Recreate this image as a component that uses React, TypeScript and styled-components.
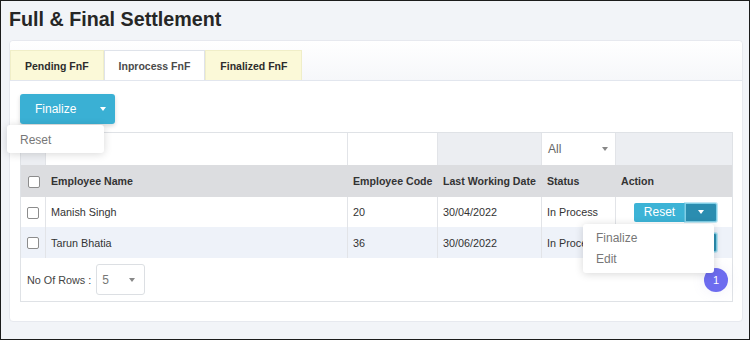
import React from "react";
import styled, { createGlobalStyle } from "styled-components";

const Global = createGlobalStyle`
  html, body { margin: 0; padding: 0; }
  body { font-family: "Liberation Sans", Arial, sans-serif; }
  * { box-sizing: border-box; }
`;

const Page = styled.div`
  width: 750px;
  height: 340px;
  border: 1px solid #1c1c1c;
  background: #f2f4f8;
  padding: 0 6px 0 8px;
  overflow: hidden;
`;

const Title = styled.h1`
  margin: 7px 0 0 0;
  font-size: 19.7px;
  line-height: 22px;
  font-weight: 700;
  color: #262626;
`;

const Card = styled.div`
  margin-top: 10px;
  height: 282px;
  background: #fff;
  border: 1px solid #e7e9ef;
  border-radius: 4px;
  display: flex;
  flex-direction: column;
`;

const TabBar = styled.div`
  display: flex;
  height: 40px;
  padding-top: 9px;
  border-bottom: 1px solid #e2e6ee;
  background: linear-gradient(#ffffff, #f6f7fa);
  border-radius: 4px 4px 0 0;
`;

const Tab = styled.div<{ $active?: boolean }>`
  height: 30px;
  padding: 0 14px;
  display: flex;
  align-items: center;
  font-size: 10.5px;
  font-weight: 700;
  color: ${(p) => (p.$active ? "#4a4a4a" : "#2c2c2c")};
  background: ${(p) => (p.$active ? "#ffffff" : "#fbf9d8")};
  border: 1px solid ${(p) => (p.$active ? "#dfe3ea" : "#f0eec8")};
  border-bottom: none;
`;

const Body = styled.div`
  flex: 1;
  padding: 13px 9px 0 10px;
`;

const SplitWrap = styled.div`
  position: relative;
  width: 95px;
  height: 30px;
`;

const PrimaryButton = styled.button`
  width: 95px;
  height: 30px;
  border: none;
  border-radius: 3px;
  background: #3ab0d4;
  color: #fff;
  font: 12px "Liberation Sans", Arial, sans-serif;
  display: flex;
  align-items: center;
  justify-content: space-between;
  padding: 0 9px 0 15px;
  box-shadow: 0 2px 4px rgba(0, 0, 0, 0.15);
`;

const Caret = styled.span<{ $color?: string }>`
  display: inline-block;
  width: 0;
  height: 0;
  border-left: 3.5px solid transparent;
  border-right: 3.5px solid transparent;
  border-top: 4px solid ${(p) => p.$color || "#fff"};
`;

const Menu = styled.div<{ $top: number; $left: number; $width: number }>`
  position: absolute;
  top: ${(p) => p.$top}px;
  left: ${(p) => p.$left}px;
  width: ${(p) => p.$width}px;
  padding: 4px 0 3px;
  background: #fff;
  border-radius: 3px;
  box-shadow: 0 1px 8px rgba(0, 0, 0, 0.16);
  z-index: 10;
`;

const MenuItem = styled.div`
  height: 21px;
  display: flex;
  align-items: center;
  padding-left: 13px;
  font-size: 12px;
  color: #777;
`;

const TableBox = styled.div`
  margin-top: 8px;
  border: 1px solid #dfe2e6;
`;

const Table = styled.table`
  width: 100%;
  border-collapse: separate;
  border-spacing: 0;
  table-layout: fixed;
`;

const FilterRow = styled.tr`
  height: 32px;
  background: #eceef2;
`;

const FilterCell = styled.td<{ $input?: boolean }>`
  padding: 0 6px;
  background: ${(p) => (p.$input ? "#fff" : "transparent")};
  border-right: 1px solid #e2e4e8;
  font-size: 12px;
  color: #666;
  &:last-child { border-right: none; }
`;

const SelectInner = styled.div`
  display: flex;
  align-items: center;
  justify-content: space-between;
  padding-right: 1px;
`;

const HeadRow = styled.tr`
  height: 32px;
  background: #dcdde0;
`;

const Th = styled.th<{ $center?: boolean }>`
  padding: 0 5px;
  text-align: ${(p) => (p.$center ? "center" : "left")};
  font-size: 10.6px;
  font-weight: 700;
  color: #333;
  white-space: nowrap;
`;

const Row = styled.tr<{ $alt?: boolean; $h: number }>`
  height: ${(p) => p.$h}px;
  background: ${(p) => (p.$alt ? "#eef2f9" : "#fff")};
`;

const Td = styled.td<{ $center?: boolean }>`
  padding: 0 5px;
  text-align: ${(p) => (p.$center ? "center" : "left")};
  font-size: 10.8px;
  color: #333;
  border-right: 1px solid #e2e4e8;
  white-space: nowrap;
  overflow: visible;
  &:last-child { border-right: none; }
`;

const ActionTd = styled.td`
  padding: 0 0 0 18px;
`;

const Check = styled.span`
  display: inline-block;
  vertical-align: middle;
  width: 12px;
  height: 12px;
  border: 1px solid #8c8c8c;
  border-radius: 2px;
  background: #fff;
`;

const RowSplit = styled.div`
  position: relative;
  display: inline-flex;
  height: 19px;
  vertical-align: middle;
`;

const RowMain = styled.span`
  width: 51px;
  display: flex;
  align-items: center;
  justify-content: center;
  background: #3cb3d6;
  color: #fff;
  font-size: 12px;
  border-radius: 2px 0 0 2px;
`;

const RowToggle = styled.span`
  width: 32px;
  display: flex;
  align-items: center;
  justify-content: center;
  background: #2b8db0;
  border: 1px solid #80cfe6;
  border-radius: 0 2px 2px 0;
  box-shadow: 0 0 0 1px rgba(130, 205, 232, 0.5);
`;

const Footer = styled.div`
  height: 43px;
  display: flex;
  align-items: center;
  justify-content: space-between;
  padding: 0 4px 0 6px;
`;

const RowsLabel = styled.div`
  display: flex;
  align-items: center;
  font-size: 10.8px;
  color: #444;
`;

const RowsSelect = styled.div`
  margin-left: 5px;
  width: 49px;
  height: 31px;
  border: 1px solid #dcdfe3;
  border-radius: 3px;
  display: flex;
  align-items: center;
  justify-content: space-between;
  padding: 0 9px 0 5px;
  font-size: 12px;
  color: #777;
`;

const PageDot = styled.div`
  width: 24px;
  height: 24px;
  border-radius: 50%;
  background: #6d6cef;
  color: #fff;
  font-size: 11px;
  display: flex;
  align-items: center;
  justify-content: center;
  box-shadow: 0 0 14px rgba(120, 120, 200, 0.12);
`;

type Emp = { name: string; code: string; date: string; status: string };
const rows: Emp[] = [
  { name: "Manish Singh", code: "20", date: "30/04/2022", status: "In Process" },
  { name: "Tarun Bhatia", code: "36", date: "30/06/2022", status: "In Process" },
];

export default function App() {
  return (
    <>
      <Global />
      <Page>
        <Title>Full &amp; Final Settlement</Title>
        <Card>
          <TabBar>
            <Tab>Pending FnF</Tab>
            <Tab $active>Inprocess FnF</Tab>
            <Tab>Finalized FnF</Tab>
          </TabBar>
          <Body>
            <SplitWrap>
              <PrimaryButton>
                <span>Finalize</span>
                <Caret />
              </PrimaryButton>
              <Menu $top={31} $left={-13} $width={97}>
                <MenuItem>Reset</MenuItem>
              </Menu>
            </SplitWrap>
            <TableBox>
              <Table>
                <colgroup>
                  <col style={{ width: 25 }} />
                  <col style={{ width: 302 }} />
                  <col style={{ width: 90 }} />
                  <col style={{ width: 104 }} />
                  <col style={{ width: 74 }} />
                  <col />
                </colgroup>
                <thead>
                  <FilterRow>
                    <FilterCell />
                    <FilterCell $input />
                    <FilterCell $input />
                    <FilterCell />
                    <FilterCell $input>
                      <SelectInner>
                        <span>All</span>
                        <Caret $color="#888" />
                      </SelectInner>
                    </FilterCell>
                    <FilterCell />
                  </FilterRow>
                  <HeadRow>
                    <Th $center>
                      <Check />
                    </Th>
                    <Th>Employee Name</Th>
                    <Th>Employee Code</Th>
                    <Th>Last Working Date</Th>
                    <Th>Status</Th>
                    <Th>Action</Th>
                  </HeadRow>
                </thead>
                <tbody>
                  {rows.map((r, i) => (
                    <Row key={r.name} $alt={i === 1} $h={i === 0 ? 30 : 31}>
                      <Td $center>
                        <Check />
                      </Td>
                      <Td>{r.name}</Td>
                      <Td>{r.code}</Td>
                      <Td>{r.date}</Td>
                      <Td>{r.status}</Td>
                      <ActionTd>
                        <RowSplit>
                          <RowMain>Reset</RowMain>
                          <RowToggle>
                            <Caret />
                          </RowToggle>
                          {i === 0 && (
                            <Menu $top={21} $left={-51} $width={131}>
                              <MenuItem>Finalize</MenuItem>
                              <MenuItem>Edit</MenuItem>
                            </Menu>
                          )}
                        </RowSplit>
                      </ActionTd>
                    </Row>
                  ))}
                </tbody>
              </Table>
              <Footer>
                <RowsLabel>
                  No Of Rows :
                  <RowsSelect>
                    <span>5</span>
                    <Caret $color="#888" />
                  </RowsSelect>
                </RowsLabel>
                <PageDot>1</PageDot>
              </Footer>
            </TableBox>
          </Body>
        </Card>
      </Page>
    </>
  );
}
